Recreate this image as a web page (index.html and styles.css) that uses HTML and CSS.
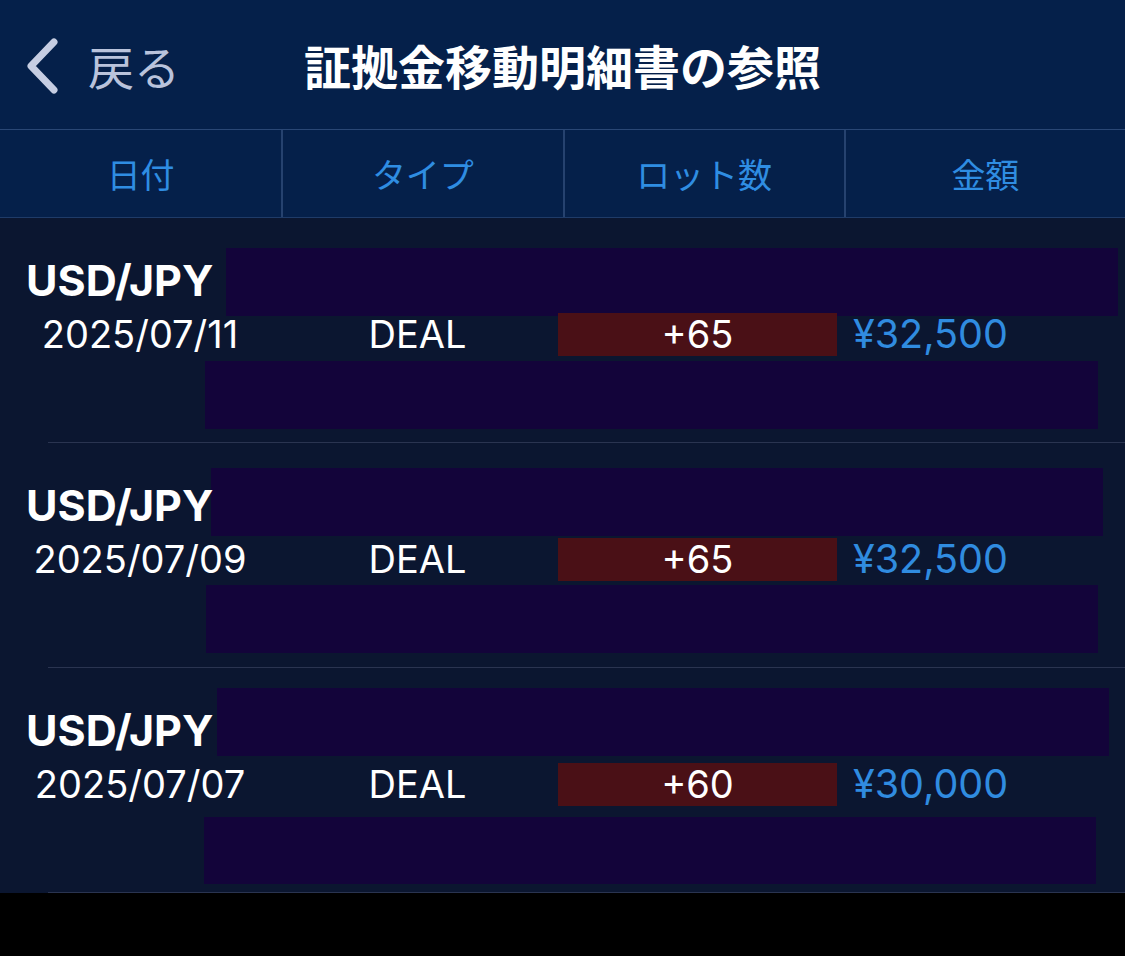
FILE: index.html
```html
<!DOCTYPE html>
<html lang="ja">
<head>
<meta charset="UTF-8" />
<meta name="viewport" content="width=device-width, initial-scale=1" />
<title>証拠金移動明細書の参照</title>
<link rel="stylesheet" href="styles.css">
</head>
<body>
  <header class="nav">
    <a class="back" href="#">
      <svg class="chevron" viewBox="0 0 40 60" width="40" height="60" aria-hidden="true">
        <path d="M32 7 L9 31 L32 55" fill="none" stroke="currentColor" stroke-width="7" stroke-linecap="round" stroke-linejoin="round"/>
      </svg>
      <span>戻る</span>
    </a>
    <h1>証拠金移動明細書の参照</h1>
    <div></div>
  </header>

  <div class="col-head">
    <div>日付</div>
    <div>タイプ</div>
    <div>ロット数</div>
    <div>金額</div>
  </div>

  <ul class="list">
    <li class="row row-1">
      <div class="pair">USD/JPY</div>
      <div class="cells">
        <span class="date">2025/07/11</span>
        <span class="type">DEAL</span>
        <span class="lots">+65</span>
        <span class="amount">¥32,500</span>
      </div>
      <div class="mask mask-top"></div>
      <div class="mask mask-bottom"></div>
    </li>
    <li class="row row-2">
      <div class="pair">USD/JPY</div>
      <div class="cells">
        <span class="date">2025/07/09</span>
        <span class="type">DEAL</span>
        <span class="lots">+65</span>
        <span class="amount">¥32,500</span>
      </div>
      <div class="mask mask-top"></div>
      <div class="mask mask-bottom"></div>
    </li>
    <li class="row row-3">
      <div class="pair">USD/JPY</div>
      <div class="cells">
        <span class="date">2025/07/07</span>
        <span class="type">DEAL</span>
        <span class="lots">+60</span>
        <span class="amount">¥30,000</span>
      </div>
      <div class="mask mask-top"></div>
      <div class="mask mask-bottom"></div>
    </li>
  </ul>
</body>
</html>
```

FILE: styles.css
```css
/* Reset */
* {
  box-sizing: border-box;
}
body {
  margin: 0;
  background: #000;
  font-family: Inter, "Liberation Sans", "Noto Sans CJK JP", sans-serif;
  color: #fff;
}

/* Nav bar */
.nav {
  height: 130px;
  background: #05204a;
  border-bottom: 1px solid #2a4775;
  display: grid;
  grid-template-columns: 1fr auto 1fr;
  align-items: center;
}
.back {
  display: flex;
  align-items: center;
  gap: 26px;
  padding-left: 22px;
  color: #b9c3dc;
  text-decoration: none;
  font-family: "Noto Sans CJK JP", sans-serif;
  font-size: 46px;
}
.chevron {
  color: #c6cde2;
}
.nav h1 {
  margin: 0;
  font-family: "Noto Sans CJK JP", sans-serif;
  font-size: 47px;
  font-weight: 700;
}

/* Column headers */
.col-head {
  height: 88px;
  background: #05204a;
  border-bottom: 1px solid #1f3b68;
  display: grid;
  grid-template-columns: repeat(4, 1fr);
}
.col-head div {
  display: flex;
  align-items: center;
  justify-content: center;
  font-family: "Noto Sans CJK JP", sans-serif;
  font-size: 34px;
  color: #2f8de2;
}
.col-head div + div {
  border-left: 2px solid #26426f;
}

/* List */
.list {
  list-style: none;
  margin: 0;
  padding: 0;
  background: #0b1630;
}
.row {
  position: relative;
  height: 225px;
  padding-top: 36px;
}
.row::after {
  content: "";
  position: absolute;
  left: 48px;
  right: 0;
  bottom: 0;
  height: 1px;
  background: #2a3450;
}
.pair {
  position: relative;
  z-index: 1;
  padding-left: 26px;
  font-size: 43px;
  font-weight: 700;
  line-height: 52px;
}
.cells {
  position: relative;
  z-index: 1;
  margin-top: 7px;
  display: grid;
  grid-template-columns: 280px 278px 279px 1fr;
  align-items: center;
  height: 43px;
  font-size: 38px;
  line-height: 43px;
}
.date,
.type,
.lots {
  text-align: center;
}
.type {
  padding-right: 3px;
}
.lots {
  background: #4a1016;
}
.amount {
  padding-left: 16px;
  font-size: 39.5px;
  color: #308ce0;
}

/* Redaction blocks */
.mask {
  position: absolute;
  background: #13043a;
  width: 892px;
  height: 68px;
}
.row-1 .mask-top { top: 30px; left: 226px; }
.row-1 .mask-bottom { top: 143px; left: 205px; width: 893px; }
.row-2 .mask-top { top: 25px; left: 211px; }
.row-2 .mask-bottom { top: 142px; left: 206px; }
.row-3 .mask-top { top: 20px; left: 217px; }
.row-3 .mask-bottom { top: 149px; left: 204px; height: 67px; }
```
